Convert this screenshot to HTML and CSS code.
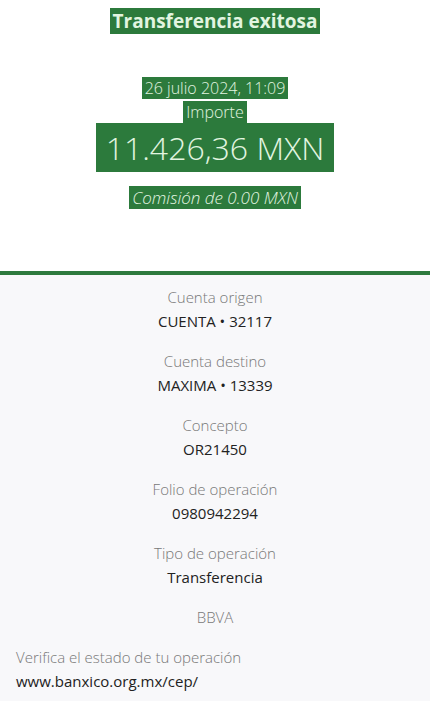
FILE: index.html
```html
<!DOCTYPE html>
<html lang="es">
<head>
    <meta charset="UTF-8">
    <meta name="viewport" content="width=device-width, initial-scale=1.0">
    <title>Transferencia exitosa</title>
    <link rel="stylesheet" href="styles.css">
</head>
<body>
    <div class="header">
        <h1><span class="mark">Transferencia exitosa</span></h1>
        <div class="date"><span class="mark">26 julio 2024, 11:09</span></div>
        <div class="label-top"><span class="mark">Importe</span></div>
        <div class="amount"><span class="mark">11.426,36 MXN</span></div>
        <div class="fee"><span class="mark">Comisión de 0.00 MXN</span></div>
    </div>
    <div class="divider"></div>
    <div class="details">
        <div class="item">
            <div class="label">Cuenta origen</div>
            <div class="value">CUENTA • 32117</div>
        </div>
        <div class="item">
            <div class="label">Cuenta destino</div>
            <div class="value">MAXIMA • 13339</div>
        </div>
        <div class="item">
            <div class="label">Concepto</div>
            <div class="value">OR21450</div>
        </div>
        <div class="item">
            <div class="label">Folio de operación</div>
            <div class="value">0980942294</div>
        </div>
        <div class="item">
            <div class="label">Tipo de operación</div>
            <div class="value">Transferencia</div>
        </div>
        <div class="item">
            <div class="label">BBVA</div>
        </div>
        <div class="verify">
            <div class="label">Verifica el estado de tu operación</div>
            <div class="value">www.banxico.org.mx/cep/</div>
        </div>
    </div>
</body>
</html>
```

FILE: styles.css
```css
body {
    margin: 0;
    font-family: "Open Sans", "Liberation Sans", sans-serif;
    background: #f8f8fa;
}
.header {
    background: #fff;
    height: 271px;
    text-align: center;
    padding-top: 9px;
    box-sizing: border-box;
}
.mark {
    background: #2c7a3c;
    color: #e2f5e0;
    padding: 0 3px;
}
h1 {
    margin: 0;
    font-size: 19px;
    font-weight: 700;
    line-height: 24px;
}
.date {
    margin-top: 45px;
    font-size: 16px;
    font-weight: 300;
    line-height: 20px;
}
.label-top {
    margin-top: 4px;
    font-size: 16px;
    font-weight: 300;
    line-height: 20px;
}
.amount {
    margin-top: 6px;
    font-size: 32px;
    font-weight: 300;
    line-height: 40px;
}
.amount .mark {
    padding: 3px 10px;
}
.fee {
    margin-top: 20px;
    font-size: 17px;
    font-weight: 300;
    font-style: italic;
    line-height: 20px;
}
.divider {
    height: 4px;
    background: #2e7a3e;
}
.details {
    padding-top: 10px;
    text-align: center;
}
.item {
    margin-bottom: 16px;
}
.label {
    font-size: 15px;
    font-weight: 300;
    color: #777;
    line-height: 24px;
}
.value {
    font-size: 15px;
    color: #222;
    line-height: 24px;
}
.verify {
    text-align: left;
    padding: 0 16px;
}
```
